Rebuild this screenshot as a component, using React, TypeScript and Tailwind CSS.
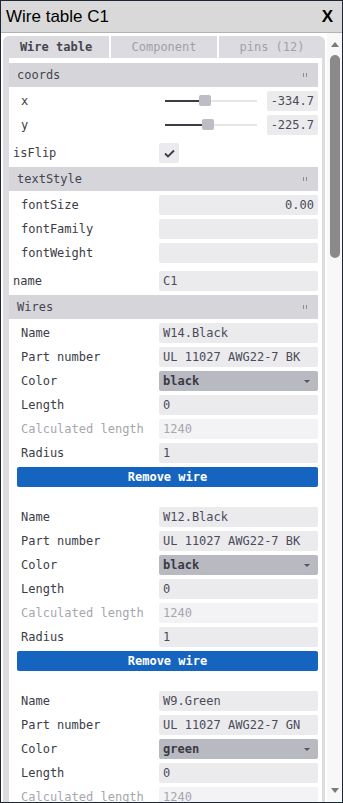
import type { ReactNode } from 'react'

const mono = { fontFamily: '"DejaVu Sans Mono", "Liberation Mono", monospace' }

type Wire = { name: string; part: string; color: string; length: string; calc: string; radius: string }

const wires: Wire[] = [
  { name: 'W14.Black', part: 'UL 11027 AWG22-7 BK', color: 'black', length: '0', calc: '1240', radius: '1' },
  { name: 'W12.Black', part: 'UL 11027 AWG22-7 BK', color: 'black', length: '0', calc: '1240', radius: '1' },
  { name: 'W9.Green', part: 'UL 11027 AWG22-7 GN', color: 'green', length: '0', calc: '1240', radius: '1' },
  { name: 'W7.Red', part: 'UL 11027 AWG22-7 RD', color: 'red', length: '0', calc: '1240', radius: '1' },
]

function Header({ title }: { title: string }) {
  return (
    <div className="h-6 bg-[#d6d6da] flex items-center justify-between pl-2 pr-[11px] text-[#45454f]">
      <span>{title}</span>
      <span className="flex gap-[2px]">
        <span className="w-px h-[4px] bg-[#8c8c94]" />
        <span className="w-px h-[4px] bg-[#8c8c94]" />
      </span>
    </div>
  )
}

function Row({ label, children, muted }: { label: string; children: ReactNode; muted?: boolean }) {
  return (
    <div className="flex items-center h-5">
      <span className={`pl-1 w-[142px] shrink-0 ${muted ? 'text-[#a6a6ae]' : 'text-[#3c3c46]'}`}>{label}</span>
      <div className="flex-1 min-w-0">{children}</div>
    </div>
  )
}

function Field({ value, right, muted }: { value: string; right?: boolean; muted?: boolean }) {
  return (
    <div
      className={`h-5 rounded-[2px] px-1 flex items-center whitespace-nowrap ${right ? 'justify-end' : ''} ${
        muted ? 'bg-[#f3f3f5] text-[#a6a6ae]' : 'bg-[#ebebed] text-[#4b4b5a]'
      }`}
    >
      {value}
    </div>
  )
}

function Slider({ label, pos, value }: { label: string; pos: number; value: string }) {
  return (
    <div className="flex items-center h-5">
      <span className="pl-1 w-[148px] shrink-0 text-[#3c3c46]">{label}</span>
      <div className="relative w-[92px] h-5">
        <div className="absolute left-0 right-0 top-[9px] h-[2px] bg-[#e6e6e9]" />
        <div className="absolute left-0 top-[9px] h-[2px] bg-[#3c3c44]" style={{ width: pos }} />
        <div className="absolute top-[4px] w-3 h-[11px] rounded-[2px] bg-[#bdbdc5]" style={{ left: pos - 6 }} />
      </div>
      <div className="ml-auto w-[51px]">
        <Field value={value} right />
      </div>
    </div>
  )
}

function WireBlock({ w }: { w: Wire }) {
  return (
    <div className="flex flex-col gap-1 pl-2">
      <Row label="Name"><Field value={w.name} /></Row>
      <Row label="Part number"><Field value={w.part} /></Row>
      <Row label="Color">
        <div className="h-5 rounded-[2px] bg-[#b9b9c1] px-1 flex items-center justify-between font-bold text-[#3a3a44]">
          <span>{w.color}</span>
          <span className="w-0 h-0 border-l-[3px] border-r-[3px] border-t-[3px] border-l-transparent border-r-transparent border-t-[#55555f] mr-[4px]" />
        </div>
      </Row>
      <Row label="Length"><Field value={w.length} /></Row>
      <Row label="Calculated length" muted><Field value={w.calc} muted /></Row>
      <Row label="Radius"><Field value={w.radius} /></Row>
      <button className="h-5 rounded-[2px] bg-[#1565c0] text-white font-bold">Remove wire</button>
    </div>
  )
}

function Scrollbar() {
  return (
    <div className="w-[15px] shrink-0 bg-[#f8f8f8] flex flex-col items-center">
      <div className="h-[15px] w-full flex items-center justify-center mt-[4px]">
        <span className="w-0 h-0 border-l-[4px] border-r-[4px] border-b-[5px] border-l-transparent border-r-transparent border-b-[#7a7a7a]" />
      </div>
      <div className="mt-[3px] w-[10px] h-[203px] rounded-[5px] bg-[#8a8a8a]" />
      <div className="flex-1" />
      <div className="h-[15px] w-full flex items-center justify-center mb-[4px]">
        <span className="w-0 h-0 border-l-[4px] border-r-[4px] border-t-[5px] border-l-transparent border-r-transparent border-t-[#7a7a7a]" />
      </div>
    </div>
  )
}

export default function App() {
  return (
    <div className="w-[343px] h-[803px] border border-[#1d2736] bg-white flex flex-col">
      <div
        className="h-[32px] shrink-0 bg-[#d9d9d9] border-b border-[#b3b3b3] flex items-center justify-between pl-[5px] pr-[9px] text-black"
        style={{ fontFamily: '"Liberation Sans", Arial, sans-serif' }}
      >
        <span className="text-[17px]">Wire table C1</span>
        <span className="text-[17px] font-bold">X</span>
      </div>
      <div className="flex-1 min-h-0 flex">
        <div className="flex-1 min-w-0 overflow-hidden text-[12px]" style={mono}>
          <div className="ml-[2px] mr-[2px] mt-[3px] rounded-t-[6px] bg-[#dcdce0] pl-[6px] pr-[3px]">
            <div className="flex h-[22px] -ml-[6px] -mr-[3px]">
              <div className="flex-1 flex items-center justify-center font-bold text-[#45454f]">Wire table</div>
              <div className="w-[2px] bg-white" />
              <div className="flex-1 flex items-center justify-center text-[#a0a0a8]">Component</div>
              <div className="w-[2px] bg-white" />
              <div className="flex-1 flex items-center justify-center text-[#a0a0a8]">pins (12)</div>
            </div>
            <div className="bg-white pt-[5px] pr-1 flex flex-col gap-1 pb-4">
              <div className="flex flex-col">
                <Header title="coords" />
                <div className="flex flex-col gap-1 pl-2 pt-1">
                  <Slider label="x" pos={40} value="-334.7" />
                  <Slider label="y" pos={43} value="-225.7" />
                </div>
              </div>
              <div className="flex items-center h-5 mt-1">
                <span className="pl-1 w-[150px] shrink-0 text-[#3c3c46]">isFlip</span>
                <div className="w-5 h-5 rounded-[2px] bg-[#ebebed] flex items-center justify-center">
                  <svg width="11" height="9" viewBox="0 0 11 9" fill="none">
                    <path d="M1 4.5 L4 7.5 L10 1.5" stroke="#3a3a44" strokeWidth="1.8" />
                  </svg>
                </div>
              </div>
              <div className="flex flex-col">
                <Header title="textStyle" />
                <div className="flex flex-col gap-1 pl-2 pt-1 pb-1">
                  <Row label="fontSize"><Field value="0.00" right /></Row>
                  <Row label="fontFamily"><Field value="" /></Row>
                  <Row label="fontWeight"><Field value="" /></Row>
                </div>
              </div>
              <div className="flex items-center h-5">
                <span className="pl-1 w-[150px] shrink-0 text-[#3c3c46]">name</span>
                <div className="flex-1"><Field value="C1" /></div>
              </div>
              <div className="flex flex-col">
                <Header title="Wires" />
                <div className="flex flex-col gap-5 pt-1">
                  {wires.map((w) => (
                    <WireBlock key={w.name} w={w} />
                  ))}
                </div>
              </div>
            </div>
          </div>
        </div>
        <Scrollbar />
      </div>
    </div>
  )
}
